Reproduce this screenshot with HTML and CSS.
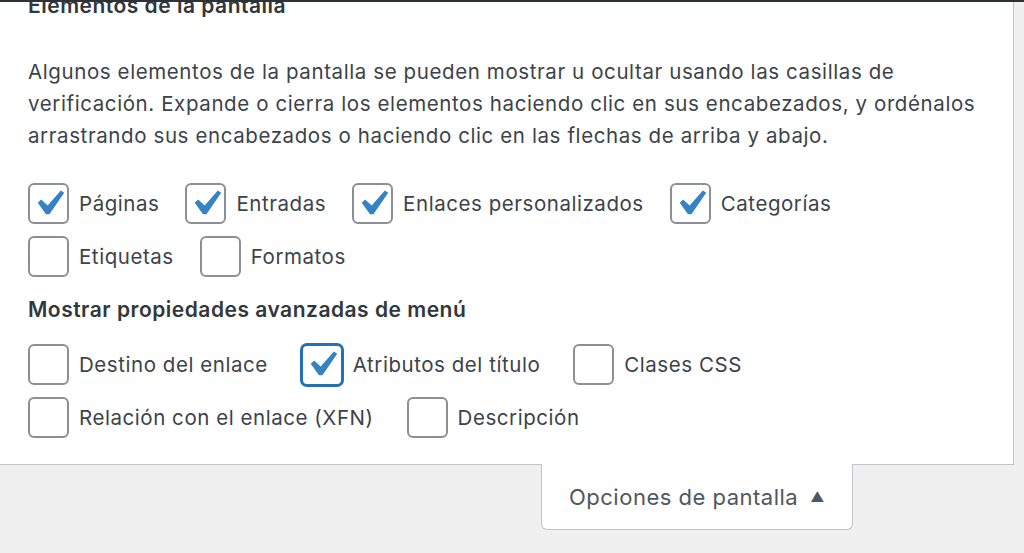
FILE: index.html
```html
<!DOCTYPE html>
<html lang="es">
<head>
<meta charset="utf-8">
<title>Opciones de pantalla</title>
<link rel="stylesheet" href="styles.css">
</head>
<body>
<div class="adminbar"></div>
<div class="panel">
  <h5 class="legend legend-top">Elementos de la pantalla</h5>
  <p class="intro">Algunos elementos de la pantalla se pueden mostrar u ocultar usando las casillas de verificación. Expande o cierra los elementos haciendo clic en sus encabezados, y ordénalos arrastrando sus encabezados o haciendo clic en las flechas de arriba y abajo.</p>
  <div class="prefs prefs-first">
    <div class="row">
      <label class="opt"><span class="box"><svg viewBox="0 0 20 20"><path d="M14.83 4.89l1.34.94-5.81 8.38H9.02L5.78 9.67l1.34-1.25 2.57 2.4z"/></svg></span>Páginas</label>
      <label class="opt"><span class="box"><svg viewBox="0 0 20 20"><path d="M14.83 4.89l1.34.94-5.81 8.38H9.02L5.78 9.67l1.34-1.25 2.57 2.4z"/></svg></span>Entradas</label>
      <label class="opt"><span class="box"><svg viewBox="0 0 20 20"><path d="M14.83 4.89l1.34.94-5.81 8.38H9.02L5.78 9.67l1.34-1.25 2.57 2.4z"/></svg></span>Enlaces personalizados</label>
      <label class="opt"><span class="box"><svg viewBox="0 0 20 20"><path d="M14.83 4.89l1.34.94-5.81 8.38H9.02L5.78 9.67l1.34-1.25 2.57 2.4z"/></svg></span>Categorías</label>
    </div>
    <div class="row">
      <label class="opt"><span class="box"></span>Etiquetas</label>
      <label class="opt"><span class="box"></span>Formatos</label>
    </div>
  </div>
  <h5 class="legend legend-adv">Mostrar propiedades avanzadas de menú</h5>
  <div class="prefs prefs-adv">
    <div class="row">
      <label class="opt"><span class="box"></span>Destino del enlace</label>
      <label class="opt"><span class="box focus"><svg viewBox="0 0 20 20"><path d="M14.83 4.89l1.34.94-5.81 8.38H9.02L5.78 9.67l1.34-1.25 2.57 2.4z"/></svg></span>Atributos del título</label>
      <label class="opt"><span class="box"></span>Clases CSS</label>
    </div>
    <div class="row">
      <label class="opt"><span class="box"></span>Relación con el enlace (XFN)</label>
      <label class="opt"><span class="box"></span>Descripción</label>
    </div>
  </div>
</div>
<div class="links">
  <button class="tab" type="button">Opciones de pantalla <span class="arrow">▲</span></button>
</div>
</body>
</html>
```
FILE: styles.css
```css
html, body {
  margin: 0;
  padding: 0;
}
body {
  width: 1024px;
  height: 553px;
  overflow: hidden;
  background: #f0f0f1;
  font-family: "Inter", "Noto Sans", sans-serif;
  color: #3c434a;
  position: relative;
}
.adminbar {
  position: absolute;
  top: 0;
  left: 0;
  right: 0;
  height: 2px;
  background: #2c3338;
  z-index: 5;
}
.panel {
  width: 1014px;
  box-sizing: border-box;
  background: #fff;
  border-right: 1px solid #c3c4c7;
  border-bottom: 1px solid #c3c4c7;
  padding: 0 20px 26px 28px;
}
.legend {
  margin: 0;
  font-size: 21px;
  line-height: 28px;
  letter-spacing: 0.5px;
  font-weight: 600;
  color: #32373c;
}
.legend-top {
  margin-top: -8px;
}
.intro {
  margin: 36px 0 0;
  font-size: 20.5px;
  letter-spacing: 0.6px;
  line-height: 32px;
  max-width: 966px;
}
.prefs {
  display: flex;
  flex-direction: column;
  gap: 12px;
}
.prefs-first {
  margin-top: 31px;
}
.legend-adv {
  margin-top: 19px;
}
.prefs-adv {
  margin-top: 20px;
}
.row {
  display: flex;
  align-items: center;
}
.opt {
  display: flex;
  align-items: center;
  gap: 10px;
  margin-right: 26px;
  font-size: 20.5px;
  letter-spacing: 0.55px;
  line-height: 28px;
  color: #3c434a;
}
.prefs-adv .opt {
  margin-right: 33px;
}
.box {
  width: 41px;
  height: 41px;
  box-sizing: border-box;
  border: 2px solid #8c8f94;
  border-radius: 6px;
  background: #fff;
  display: flex;
  align-items: center;
  justify-content: center;
  flex: none;
}
.box svg {
  width: 51px;
  height: 51px;
  flex: none;
  fill: #3582c4;
}
.box.focus {
  width: 42px;
  height: 42px;
  margin: -0.5px 0;
  border-color: #2271b1;
  box-shadow: 0 0 0 1px #2271b1;
}
.links {
  display: flex;
  justify-content: flex-end;
  padding-right: 171px;
}
.tab {
  margin-top: -1px;
  width: 312px;
  height: 66px;
  box-sizing: border-box;
  background: #fff;
  border: 1px solid #c3c4c7;
  border-top: none;
  border-radius: 0 0 6px 6px;
  font-family: "Inter", "Noto Sans", sans-serif;
  font-size: 22px;
  letter-spacing: 0.5px;
  color: #50575e;
  display: flex;
  align-items: center;
  gap: 12px;
  padding: 0 0 0 27px;
}
.arrow {
  font-size: 14px;
  color: #50575e;
}
```
